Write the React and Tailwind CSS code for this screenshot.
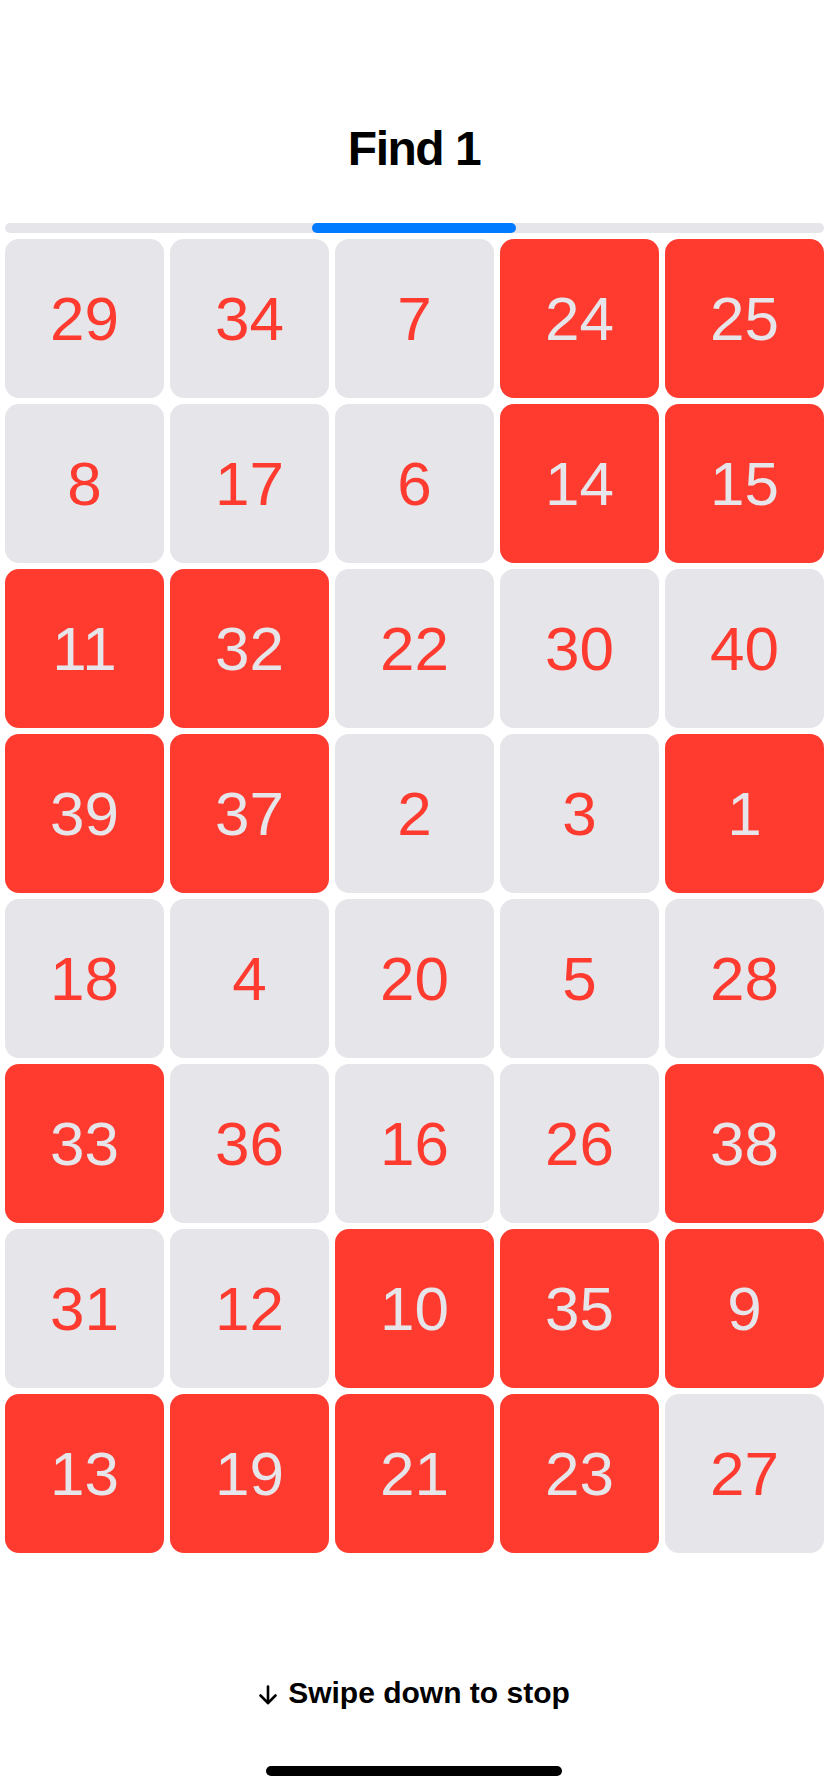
const tiles = [
  [29, 0], [34, 0], [7, 0], [24, 1], [25, 1],
  [8, 0], [17, 0], [6, 0], [14, 1], [15, 1],
  [11, 1], [32, 1], [22, 0], [30, 0], [40, 0],
  [39, 1], [37, 1], [2, 0], [3, 0], [1, 1],
  [18, 0], [4, 0], [20, 0], [5, 0], [28, 0],
  [33, 1], [36, 0], [16, 0], [26, 0], [38, 1],
  [31, 0], [12, 0], [10, 1], [35, 1], [9, 1],
  [13, 1], [19, 1], [21, 1], [23, 1], [27, 0],
];

function Tile({ n, hit }) {
  return (
    <div
      className={
        hit
          ? "aspect-square rounded-[14px] bg-[#ff3b30] text-[#e5e5ea] flex items-center justify-center"
          : "aspect-square rounded-[14px] bg-[#e5e5ea] text-[#ff3b30] flex items-center justify-center"
      }
    >
      <span className="text-[62px] leading-none">{n}</span>
    </div>
  );
}

export default function App() {
  return (
    <div
      className="w-[828px] h-[1792px] bg-white flex flex-col overflow-hidden"
      style={{ fontFamily: '"Liberation Sans", Arial, sans-serif' }}
    >
      <h1 className="pt-[125px] text-center text-[48px] leading-[48px] font-bold tracking-[-1.5px] text-black">
        Find 1
      </h1>

      <div className="mt-[50px] pl-[5px] pr-[4px]">
        <div className="h-[10px] rounded-full bg-[#e5e5ea] flex">
          <div className="ml-[307px] w-[204px] h-[10px] rounded-full bg-[#007aff]" />
        </div>
      </div>

      <div className="mt-[6px] pl-[5px] pr-[4px] grid grid-cols-5 gap-[6px]">
        {tiles.map(([n, hit]) => (
          <Tile key={n} n={n} hit={hit} />
        ))}
      </div>

      <div className="mt-[125px] flex items-center justify-center gap-[10px] text-[30px] leading-[30px] font-semibold text-black">
        <svg width="20" height="20" viewBox="0 0 20 20" fill="none" stroke="currentColor" strokeWidth="2.6" strokeLinecap="round" strokeLinejoin="round" className="mt-[4px]">
          <path d="M10 1.5v16.5" />
          <path d="M2.5 10.5l7.5 7.5 7.5-7.5" />
        </svg>
        <span>Swipe down to stop</span>
      </div>

      <div className="mt-[58px] flex justify-center">
        <div className="w-[296px] h-[10px] rounded-full bg-black" />
      </div>
    </div>
  );
}
